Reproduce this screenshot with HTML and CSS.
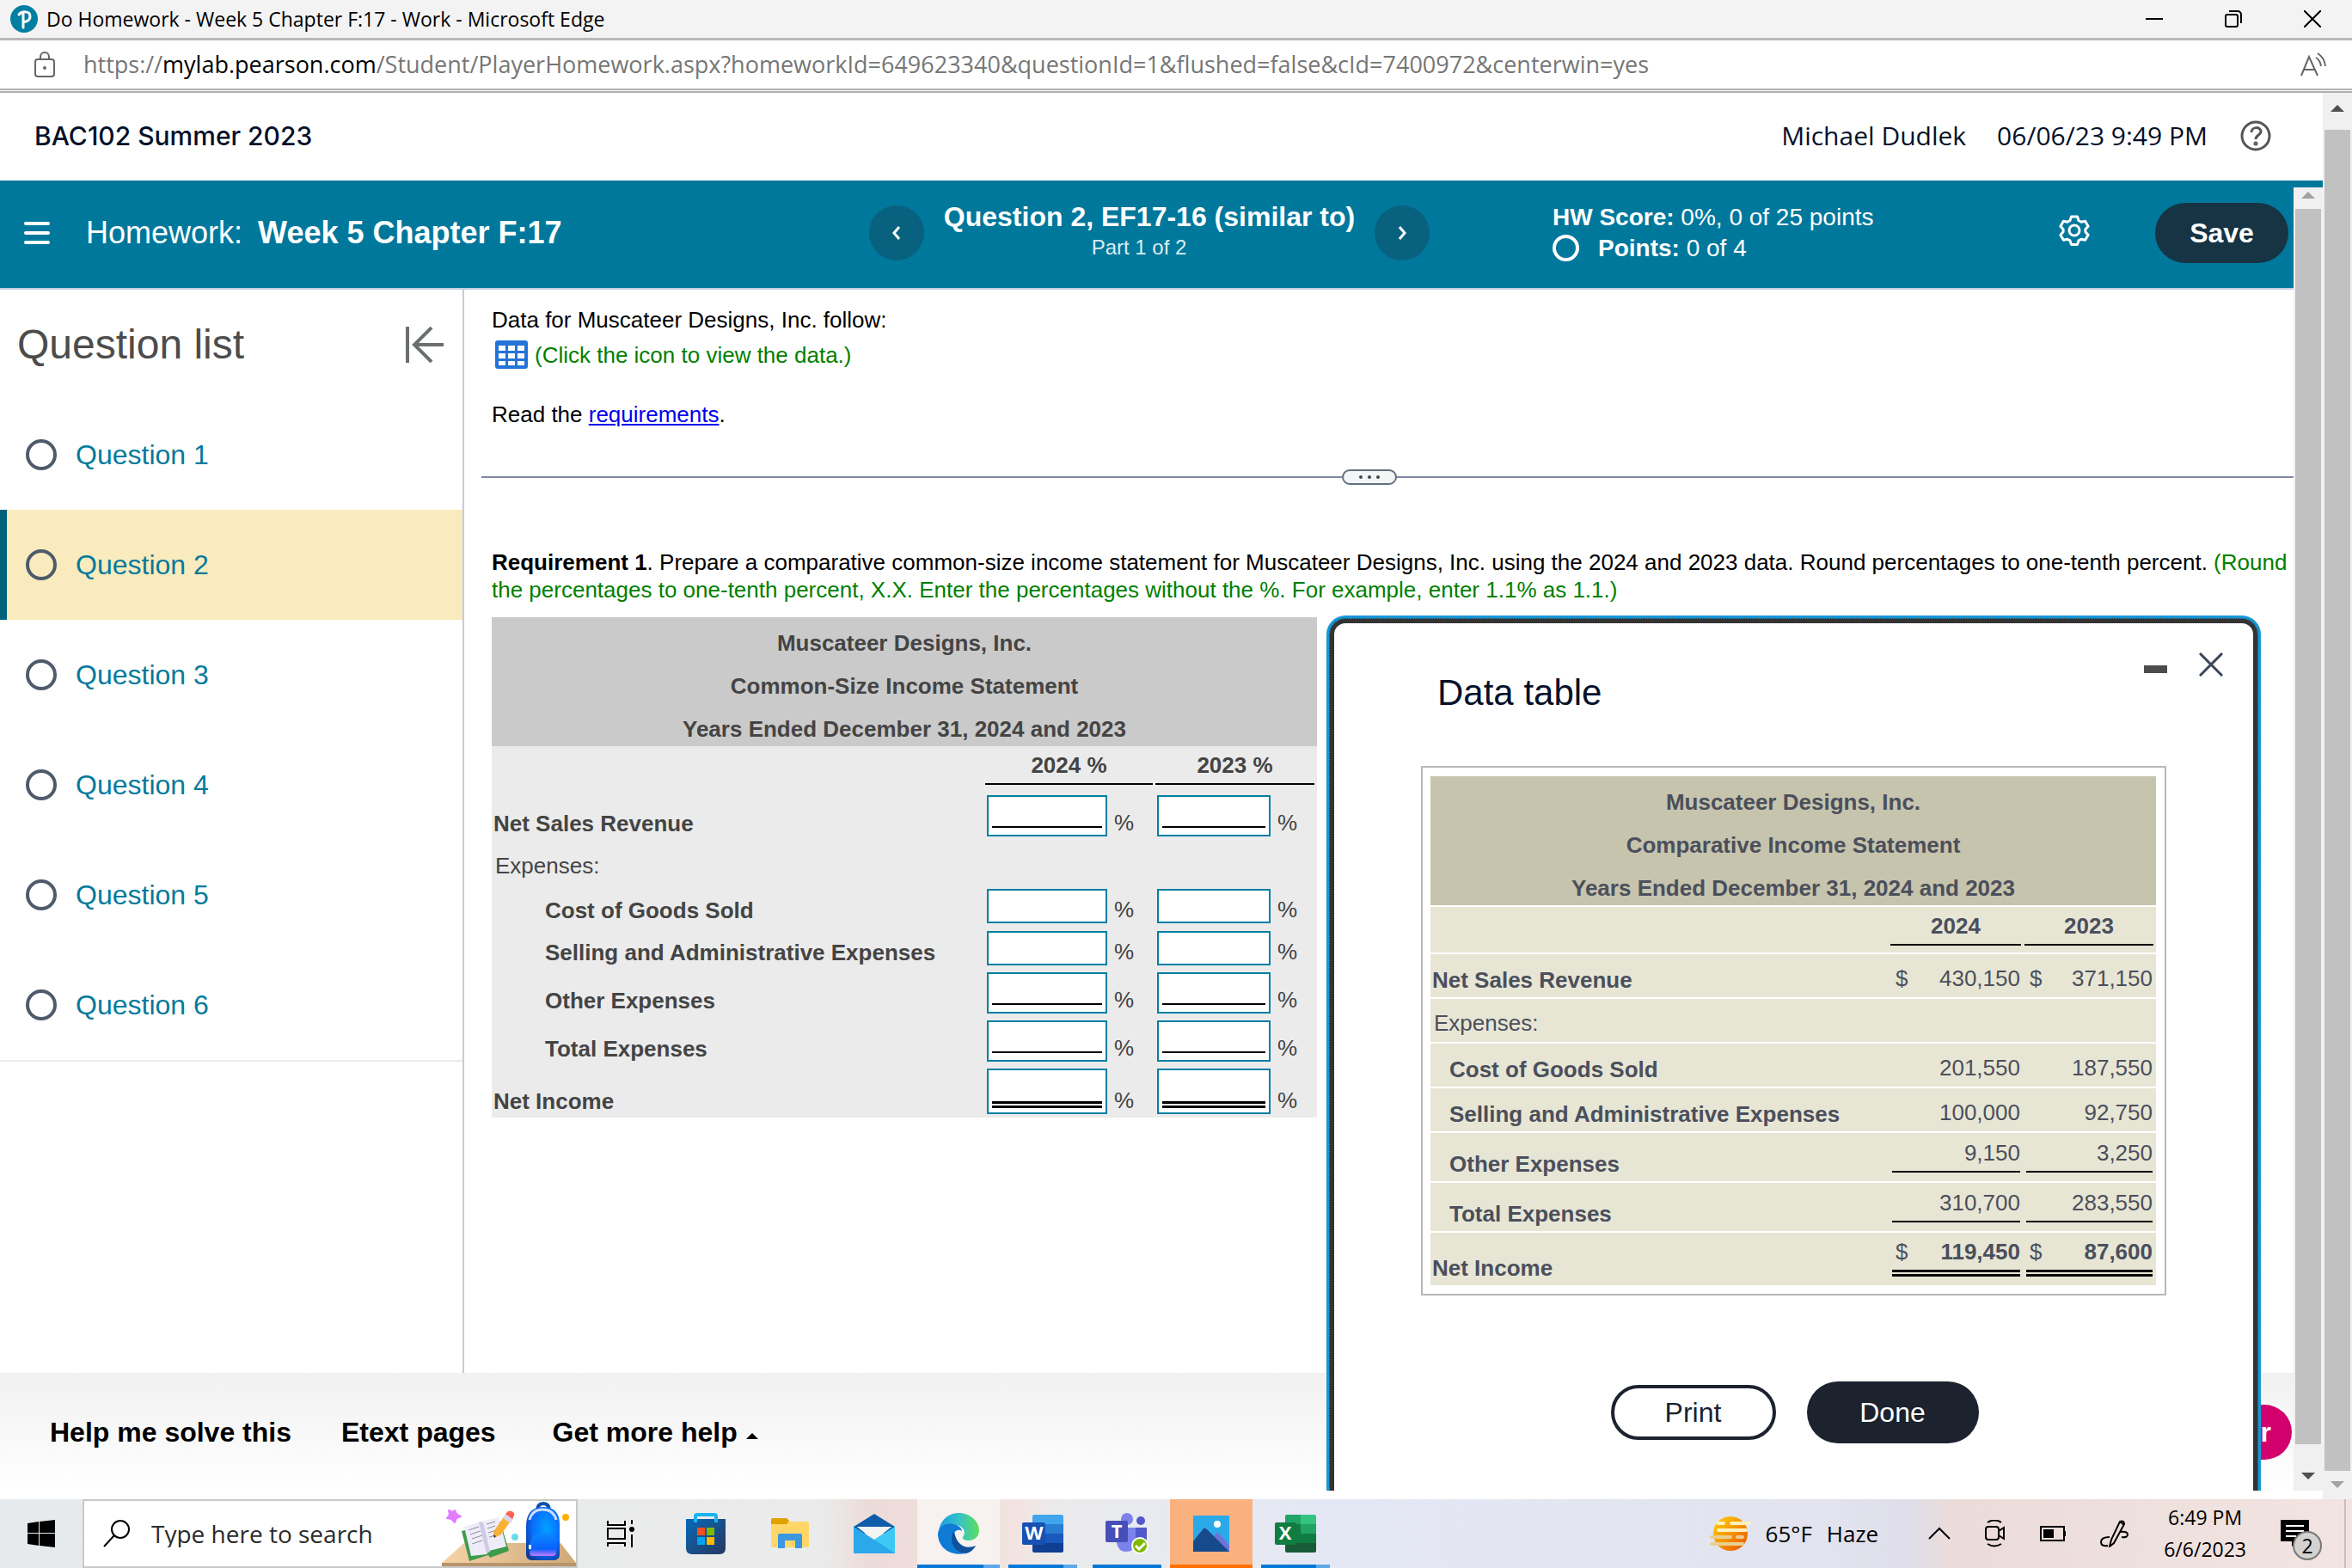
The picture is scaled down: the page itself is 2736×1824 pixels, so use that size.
FILE: index.html
```html
<!DOCTYPE html>
<html lang="en">

<head>
  <meta charset="UTF-8">
  <meta name="viewport" content="width=device-width, initial-scale=1.0">
  <title>Do Homework - Week 5 Chapter F:17</title>
  <link rel="stylesheet" href="styles.css">
</head>

<body>
  <!-- window title -->
  <div class="titlebar">
    <svg class="logo" width="32" height="32" viewBox="0 0 32 32">
      <circle cx="16" cy="16" r="16" fill="#007fa3" />
      <path d="M10 11c3-4 13-5 13 2 0 5-5 7-8 6M15 10v16" fill="none" stroke="#fff" stroke-width="3" stroke-linecap="round" />
    </svg>
    <span class="title">Do Homework - Week 5 Chapter F:17 - Work - Microsoft Edge</span>
    <div class="win-buttons">
      <button aria-label="Minimize"><svg width="20" height="20" viewBox="0 0 20 20"><path d="M0 10h20" /></svg></button>
      <button aria-label="Restore"><svg width="20" height="20" viewBox="0 0 20 20"><rect x="1" y="5" width="14" height="14" rx="2" /><path d="M5 1h10a4 4 0 0 1 4 4v10" /></svg></button>
      <button aria-label="Close"><svg width="20" height="20" viewBox="0 0 20 20"><path d="M0 0l20 20M20 0L0 20" /></svg></button>
    </div>
  </div>

  <!-- address -->
  <div class="urlbar">
    <svg class="lock" width="24" height="30" viewBox="0 0 24 30">
      <rect x="1" y="9" width="22" height="20" rx="3" />
      <path d="M7 9V6a5 5 0 0 1 10 0v3" />
      <circle cx="12" cy="19" r="1" />
    </svg>
    <span class="url">https://<b>mylab.pearson.com</b>/Student/PlayerHomework.aspx?homeworkId=649623340&amp;questionId=1&amp;flushed=false&amp;cId=7400972&amp;centerwin=yes</span>
    <svg class="aloud" width="30" height="28" viewBox="0 0 30 28">
      <path d="M1 27L10 5l10 22M4 20h13M18 6q5 3 6 10M20 1q8 5 9 15" />
    </svg>
  </div>

  <div class="viewport">
    <div class="frame">
      <header class="course">
        <h1>BAC102 Summer 2023</h1>
        <span class="user">Michael Dudlek</span>
        <span class="date">06/06/23 9:49 PM</span>
        <button class="help" aria-label="Help">
          <svg width="36" height="36" viewBox="0 0 36 36">
            <circle cx="18" cy="18" r="16" />
            <path d="M13 14c0-7 11-7 11-1 0 4-6 4-6 9" />
            <circle cx="18" cy="27" r="1" />
          </svg>
        </button>
      </header>

      <div class="player">
        <div class="player-main">
          <div class="assignment">
            <div class="name">
              <button class="menu" aria-label="Menu"><i></i><i></i><i></i></button>
              <h2>Homework: <b>Week 5 Chapter F:17</b></h2>
            </div>
            <div class="pager">
              <button class="round" aria-label="Previous"><svg width="10" height="16" viewBox="0 0 10 16"><path d="M8 1L2 8l6 7" /></svg></button>
              <div class="current">
                <strong>Question 2, EF17-16 (similar to)</strong>
                <span>Part 1 of 2</span>
              </div>
              <button class="round" aria-label="Next"><svg width="10" height="16" viewBox="0 0 10 16"><path d="M2 1l6 7-6 7" /></svg></button>
            </div>
            <div class="score">
              <p><b>HW Score:</b> 0%, 0 of 25 points</p>
              <p class="points"><i class="ring"></i><span><b>Points:</b> 0 of 4</span></p>
            </div>
            <button class="gear" aria-label="Settings">
              <svg width="36" height="36" viewBox="0 0 36 36">
                <path d="M14.500 2h7l1.500 4.500 3 1.700 4.600-1 3.500 6-3.200 3.500v3l3.200 3.500-3.500 6-4.600-1-3 1.700-1.500 4.500h-7L13 29.900l-3-1.700-4.600 1-3.500-6 3.200-3.500v-3L1.900 13.200l3.500-6 4.600 1 3-1.700z" />
                <circle cx="18" cy="18" r="6" />
              </svg>
            </button>
            <button class="save">Save</button>
          </div>

          <div class="work">
            <nav class="questions">
              <div class="list-head">
                <h3>Question list</h3>
                <button aria-label="Collapse">
                  <svg width="44" height="42" viewBox="0 0 44 42"><path d="M2 0v42M44 21H11M30 1L10 21l20 20" /></svg>
                </button>
              </div>
              <a href="#"><i class="ring"></i>Question 1</a>
              <a href="#" class="active"><i class="ring"></i>Question 2</a>
              <a href="#"><i class="ring"></i>Question 3</a>
              <a href="#"><i class="ring"></i>Question 4</a>
              <a href="#"><i class="ring"></i>Question 5</a>
              <a href="#"><i class="ring"></i>Question 6</a>
            </nav>

            <main class="question">
              <div class="intro">
                <p>Data for Muscateer Designs, Inc. follow:</p>
                <p class="data-link">
                  <svg width="38" height="33" viewBox="0 0 38 33">
                    <rect width="38" height="33" rx="3" fill="#2474d8" />
                    <path d="M4 6h8v6H4zM15 6h8v6h-8zM26 6h8v6h-8zM4 15h8v6H4zM15 15h8v6h-8zM26 15h8v6h-8zM4 24h8v5H4zM15 24h8v5h-8zM26 24h8v5h-8z" fill="#fff" />
                  </svg>
                  <span class="green">(Click the icon to view the data.)</span>
                </p>
                <p class="read">Read the <a href="#">requirements</a>.</p>
              </div>

              <div class="divider"><button aria-label="Resize"><i></i><i></i><i></i></button></div>

              <p class="requirement"><b>Requirement 1</b>. Prepare a comparative common-size income statement for Muscateer Designs, Inc. using the 2024 and 2023 data. Round percentages to one-tenth percent. <span class="green">(Round the percentages to one-tenth percent, X.X. Enter the percentages without the %. For example, enter 1.1% as 1.1.)</span></p>

              <table class="answer">
                <colgroup><col><col class="y1"><col class="y2"></colgroup>
                <thead>
                  <tr>
                    <th colspan="3" class="heading">
                      <div>Muscateer Designs, Inc.</div>
                      <div>Common-Size Income Statement</div>
                      <div>Years Ended December 31, 2024 and 2023</div>
                    </th>
                  </tr>
                  <tr class="years">
                    <td></td>
                    <th><div>2024 %</div></th>
                    <th><div>2023 %</div></th>
                  </tr>
                </thead>
                <tbody>
                  <tr class="total">
                    <th>Net Sales Revenue</th>
                    <td><label><span><input aria-label="Net Sales Revenue 2024"></span>%</label></td>
                    <td><label><span><input aria-label="Net Sales Revenue 2023"></span>%</label></td>
                  </tr>
                  <tr class="group"><td colspan="3">Expenses:</td></tr>
                  <tr>
                    <th class="indent">Cost of Goods Sold</th>
                    <td><label><span><input aria-label="Cost of Goods Sold 2024"></span>%</label></td>
                    <td><label><span><input aria-label="Cost of Goods Sold 2023"></span>%</label></td>
                  </tr>
                  <tr>
                    <th class="indent">Selling and Administrative Expenses</th>
                    <td><label><span><input aria-label="Selling Expenses 2024"></span>%</label></td>
                    <td><label><span><input aria-label="Selling Expenses 2023"></span>%</label></td>
                  </tr>
                  <tr class="total">
                    <th class="indent">Other Expenses</th>
                    <td><label><span><input aria-label="Other Expenses 2024"></span>%</label></td>
                    <td><label><span><input aria-label="Other Expenses 2023"></span>%</label></td>
                  </tr>
                  <tr class="total">
                    <th class="indent">Total Expenses</th>
                    <td><label><span><input aria-label="Total Expenses 2024"></span>%</label></td>
                    <td><label><span><input aria-label="Total Expenses 2023"></span>%</label></td>
                  </tr>
                  <tr class="net">
                    <th>Net Income</th>
                    <td><label><span><input aria-label="Net Income 2024"></span>%</label></td>
                    <td><label><span><input aria-label="Net Income 2023"></span>%</label></td>
                  </tr>
                </tbody>
              </table>
            </main>
          </div>

          <footer class="helpbar">
            <button>Help me solve this</button>
            <button>Etext pages</button>
            <button>Get more help<i class="caret"></i></button>
          </footer>

          <button class="tutor">r</button>

          <!-- data table popup -->
          <section class="modal">
            <div class="modal-tools">
              <button class="min" aria-label="Minimize"></button>
              <button class="close" aria-label="Close"><svg width="28" height="28" viewBox="0 0 28 28"><path d="M1 1l26 26M27 1L1 27" /></svg></button>
            </div>
            <h2>Data table</h2>
            <div class="sheet">
              <table>
                <colgroup><col><col class="y1"><col class="y2"></colgroup>
                <thead>
                  <tr>
                    <th colspan="3" class="heading">
                      <div>Muscateer Designs, Inc.</div>
                      <div>Comparative Income Statement</div>
                      <div>Years Ended December 31, 2024 and 2023</div>
                    </th>
                  </tr>
                  <tr class="years">
                    <td></td>
                    <th><div>2024</div></th>
                    <th><div>2023</div></th>
                  </tr>
                </thead>
                <tbody>
                  <tr>
                    <th>Net Sales Revenue</th>
                    <td><div><span>$</span>430,150</div></td>
                    <td><div><span>$</span>371,150</div></td>
                  </tr>
                  <tr class="group"><td colspan="3">Expenses:</td></tr>
                  <tr>
                    <th class="indent">Cost of Goods Sold</th>
                    <td><div>201,550</div></td>
                    <td><div>187,550</div></td>
                  </tr>
                  <tr>
                    <th class="indent">Selling and Administrative Expenses</th>
                    <td><div>100,000</div></td>
                    <td><div>92,750</div></td>
                  </tr>
                  <tr class="total">
                    <th class="indent">Other Expenses</th>
                    <td><div>9,150</div></td>
                    <td><div>3,250</div></td>
                  </tr>
                  <tr class="total">
                    <th class="indent">Total Expenses</th>
                    <td><div>310,700</div></td>
                    <td><div>283,550</div></td>
                  </tr>
                  <tr class="net">
                    <th>Net Income</th>
                    <td><div><span>$</span><b>119,450</b></div></td>
                    <td><div><span>$</span><b>87,600</b></div></td>
                  </tr>
                </tbody>
              </table>
            </div>
            <div class="modal-actions">
              <button class="print">Print</button>
              <button class="done">Done</button>
            </div>
          </section>
        </div>

        <div class="scroll inner"><i class="up"></i><i class="thumb"></i><i class="down"></i></div>
      </div>
    </div>
    <div class="scroll outer"><i class="up"></i><i class="thumb"></i><i class="down"></i></div>
  </div>

  <!-- taskbar -->
  <div class="taskbar">
    <button class="start" aria-label="Start">
      <svg width="32" height="32" viewBox="0 0 32 32"><path d="M0 4l13-2v13H0zM14 2l18-2v15H14zM0 16h13v14L0 28zM14 16h18v16l-18-2z" /></svg>
    </button>
    <div class="search">
      <svg class="lens" width="32" height="32" viewBox="0 0 32 32"><circle cx="20" cy="11" r="10" /><path d="M13 18L1 31" /></svg>
      <input type="text" placeholder="Type here to search" aria-label="Search">
      <svg class="art" width="156" height="76" viewBox="0 0 156 76">
        <defs>
          <linearGradient id="desk" x1="0" x2="1"><stop offset="0" stop-color="#f6d3a8" /><stop offset="1" stop-color="#cfa878" /></linearGradient>
          <radialGradient id="bag" cx="0.600" cy="0.400" r="0.700"><stop offset="0" stop-color="#00a2ff" /><stop offset="0.600" stop-color="#0a6cff" /><stop offset="1" stop-color="#0b3f9c" /></radialGradient>
          <linearGradient id="pocket" x1="0" y1="0" x2="0" y2="1"><stop offset="0" stop-color="#0a8cff" /><stop offset="0.700" stop-color="#0a60ff" /><stop offset="1" stop-color="#c77bff" /></linearGradient>
        </defs>
        <path d="M26 49h112l18 23H0z" fill="url(#desk)" />
        <path d="M0 72h156v4H0z" fill="#b8946a" />
        <path d="M15 11l2 4 5 3-5 2-2 5-4-4-5-1 3-4-1-5 5 2z" fill="#e27cff" stroke="#e27cff" stroke-width="2" stroke-linejoin="round" />
        <path d="M23 35l9 35 22-7 2 3 22-8-10-34z" fill="#3d9b4c" />
        <path d="M26 30l20-6 20-5 9 34-20 5-3 4-18 2z" fill="#eeecf8" />
        <path d="M43 25q4-3 6 3l7 31-4 2z" fill="#cfcbe4" />
        <path d="M31 34l12-4M33 39l12-4M35 44l12-4M35 50l12-4M52 27l10-3M53 32l9-3M54 37l9-3M55 42l8-2" stroke="#8f9099" stroke-width="1" />
        <path d="M61 43l-1-7 13-19 8 5-12 17z" fill="#f8b133" />
        <path d="M61 43l-1-4 3 2z" fill="#40223a" />
        <path d="M71 20l3-5 9 6-3 5z" fill="#ddd5ea" />
        <path d="M74 15l3-3q4-1 6 1 2 2 1 4l-2 4z" fill="#ff6250" />
        <circle cx="85" cy="42" r="4" fill="#6bdbe8" />
        <path d="M111 12q0-9 7-9t7 9" fill="none" stroke="#0d4fa8" stroke-width="4" />
        <path d="M98 30q0-23 20-23t19 23v32q0 7-7 7h-25q-7 0-7-7z" fill="url(#bag)" />
        <path d="M102 22q3-12 15-12 13 0 16 12" fill="none" stroke="#c9dcff" stroke-width="3" />
        <path d="M102 56q0-19 16-19t15 19v4q0 4-4 4h-23q-4 0-4-4z" fill="url(#pocket)" />
        <path d="M101 51h3v5h-3z" fill="#fff" />
        <circle cx="144" cy="19" r="4" fill="#ffb000" />
      </svg>
    </div>
    <div class="apps">
      <button aria-label="Task view">
        <svg width="32" height="32" viewBox="0 0 32 32" fill="none" stroke="#000" stroke-width="2"><path d="M1 1v5h20V1M1 31v-4h20v4M1 10h20v12H1zM29 0v5M29 17v15" /><circle cx="29" cy="11" r="2" fill="#000" /></svg>
      </button>
      <button aria-label="Store">
        <svg width="48" height="48" viewBox="0 0 48 48">
          <linearGradient id="st" x1="0" y1="0" x2="1" y2="1"><stop offset="0" stop-color="#0869b8" /><stop offset="1" stop-color="#26385e" /></linearGradient>
          <path d="M1 7h46v34q0 7-7 7H8q-7 0-7-7z" fill="url(#st)" />
          <path d="M12 11V4q0-2 2-2h20q2 0 2 2v7" fill="none" stroke="#18b4f1" stroke-width="4" />
          <path d="M14 17h9v9h-9z" fill="#f25022" /><path d="M25 17h9v9h-9z" fill="#7fba00" /><path d="M14 28h9v9h-9z" fill="#00a4ef" /><path d="M25 28h9v9h-9z" fill="#ffb900" />
        </svg>
      </button>
      <button aria-label="File Explorer">
        <svg width="44" height="36" viewBox="0 0 44 36">
          <path d="M0 2q0-2 2-2h16l4 4h20q2 0 2 2v26q0 2-2 2H2q-2 0-2-2z" fill="#ffd667" />
          <path d="M0 2q0-2 2-2h16l3 3-3 4H0z" fill="#dfa200" />
          <path d="M8 35V20q0-2 2-2h24q2 0 2 2v15h-8v-9H16v9z" fill="#3b97e0" />
        </svg>
      </button>
      <button aria-label="Mail">
        <svg width="48" height="46" viewBox="0 0 48 46">
          <path d="M0 15L24 0l24 15v8H0z" fill="#0f5ca8" /><path d="M4 15h40L24 31z" fill="#f4f4f4" /><path d="M0 15l24 15 24-15v31H0z" fill="#2aa8ea" /><path d="M4 15h40L24 30z" fill="#f4f4f4" /><path d="M24 30l24-15v31z" fill="#3dc9f5" />
        </svg>
      </button>
      <button class="open stacked current-app" aria-label="Edge">
        <svg width="48" height="48" viewBox="0 0 48 48">
          <linearGradient id="e1" x1="0" x2="1"><stop offset="0" stop-color="#1b9de2" /><stop offset="0.500" stop-color="#35c1c9" /><stop offset="1" stop-color="#5bdf5c" /></linearGradient>
          <path d="M1 20C4 6 14 0 24 0c14 0 24 10 24 20 0 8-6 12-12 12-5 0-8-2-7-4 5-7-1-14-9-14C10 13 3 17 1 20z" fill="url(#e1)" />
          <path d="M0 24c1-8 9-13 18-11 6 1 10 5 10 8-4-3-10 0-11 7-1 10 6 18 16 19C14 51 0 40 0 24z" fill="#0f7bd6" />
          <path d="M19 21c-7 9-1 26 14 26 5-1 9-5 11-9-12 5-23-1-25-17z" fill="#0e529c" />
        </svg>
      </button>
      <button class="open stacked" aria-label="Word">
        <svg width="48" height="44" viewBox="0 0 48 44">
          <path d="M12 2q0-2 2-2h32q2 0 2 2v9H12z" fill="#41a5ee" /><path d="M12 11h36v11H12z" fill="#2b7cd3" /><path d="M12 22h36v11H12z" fill="#185abd" /><path d="M12 33h36v9q0 2-2 2H14q-2 0-2-2z" fill="#103f91" />
          <rect y="9" width="27" height="26" rx="2" fill="#1651b4" /><text x="14" y="29" class="tile">W</text>
        </svg>
      </button>
      <button class="open" aria-label="Teams">
        <svg width="50" height="48" viewBox="0 0 50 48">
          <circle cx="25" cy="7" r="7" fill="#7b83eb" /><circle cx="41" cy="9" r="5" fill="#5059c9" /><path d="M32 17h16v13q-1 8-8 8-6 0-8-5z" fill="#5059c9" /><path d="M13 17h22v18q-2 10-11 10T13 35z" fill="#7b83eb" />
          <rect y="9" width="26" height="25" rx="2" fill="#464eb8" /><text x="13" y="29" class="tile">T</text>
          <circle cx="40" cy="38" r="10" fill="#fff" /><circle cx="40" cy="38" r="8" fill="#7fba00" /><path d="M35 38l4 4 7-7" fill="none" stroke="#fff" stroke-width="3" />
        </svg>
      </button>
      <button class="open alert" aria-label="Photos">
        <svg width="42" height="42" viewBox="0 0 42 42">
          <path d="M0 0h42v42H0z" fill="#2ba9e9" /><path d="M12 42l15-22q3-1 15 15v7z" fill="#6f72d6" /><path d="M0 30l12-15q2-1 4 1l26 26H0z" fill="#174a8c" /><circle cx="28" cy="10" r="4" fill="#fff" />
        </svg>
      </button>
      <button class="open stacked" aria-label="Excel">
        <svg width="48" height="44" viewBox="0 0 48 44">
          <path d="M12 2q0-2 2-2h16v11H12z" fill="#21a366" /><path d="M30 0h16q2 0 2 2v9H30z" fill="#33c481" /><path d="M12 11h18v11H12z" fill="#107c41" /><path d="M30 11h18v11H30z" fill="#21a366" /><path d="M12 22h36v11H12z" fill="#107c41" /><path d="M12 33h36v9q0 2-2 2H14q-2 0-2-2z" fill="#185c37" />
          <rect y="9" width="25" height="26" rx="2" fill="#107c41" /><text x="12" y="29" class="tile">X</text>
        </svg>
      </button>
    </div>
    <div class="tray">
      <button class="weather">
        <svg width="48" height="42" viewBox="0 0 48 42">
          <linearGradient id="sun" x1="0" y1="0" x2="1" y2="1"><stop offset="0" stop-color="#ffd400" /><stop offset="1" stop-color="#e85400" /></linearGradient>
          <circle cx="24" cy="21" r="20" fill="url(#sun)" />
          <path d="M10 9h6M25 9h21M10 17h32" stroke="#fff1bd" stroke-width="4" stroke-linecap="round" /><path d="M2 25h22M32 25h6M2 33h36" stroke="#e9cf90" stroke-width="4" stroke-linecap="round" />
        </svg>
        <span>65°F</span><span>Haze</span>
      </button>
      <button aria-label="Show hidden icons"><svg width="26" height="32" viewBox="0 0 26 32"><path d="M1 22L13 10l12 12" /></svg></button>
      <button aria-label="Meet Now"><svg width="24" height="32" viewBox="0 0 24 32"><rect x="1" y="8" width="15" height="15" rx="3" /><path d="M16 13l6-4v13l-6-4M3 3q8-5 16 0M3 28q8 5 16 0" /></svg></button>
      <button aria-label="Battery"><svg width="30" height="32" viewBox="0 0 30 32"><path d="M1 8h27v16H1zM29 13v6" /><path d="M4 11h12v10H4z" fill="#000" stroke="none" /></svg></button>
      <button aria-label="Ink"><svg width="34" height="32" viewBox="0 0 34 32"><path d="M11 31l2-8L23 2q5-2 5 3l-12 22zM23 2l5 4M11 20q-10 0-10 6 0 5 8 4M24 14q8-1 8 3t-7 3" /></svg></button>
      <div class="clock"><span>6:49 PM</span><span>6/6/2023</span></div>
      <button class="notes" aria-label="Notifications">
        <svg width="34" height="32" viewBox="0 0 34 32"><path d="M0 0h33v25H19l-6 6v-6H0z" fill="#000" stroke="none" /><path d="M6 7h21M6 13h21M6 19h12" stroke="#fff" /></svg>
        <span class="badge">2</span>
      </button>
    </div>
  </div>
</body>

</html>
```
FILE: styles.css
```css
* {
  box-sizing: border-box;
}

body {
  margin: 0;
  height: 100vh;
  display: flex;
  flex-direction: column;
  overflow: hidden;
  background-color: #fff;
  color: #000;
  font-family: "Liberation Sans", Arial, sans-serif;
  font-size: 26px;
  line-height: 32px;
}

h1,
h2,
h3,
p {
  margin: 0;
  font-weight: normal;
}

button {
  padding: 0;
  border: none;
  background: none;
  color: inherit;
  font: inherit;
  cursor: pointer;
}

svg {
  display: block;
  flex: none;
}

.green {
  color: #007f00;
}

/* browser window */
.titlebar {
  flex: none;
  height: 47px;
  padding: 0 36px 0 12px;
  display: flex;
  align-items: center;
  background-color: #f3f3f3;
  border-bottom: 3px solid #b8b8b8;
  font-family: "Open Sans", "Noto Sans", sans-serif;
  font-size: 23px;
}

.titlebar .title {
  flex: 1;
  margin-left: 10px;
}

.win-buttons {
  display: flex;
  gap: 72px;
}

.win-buttons svg {
  fill: none;
  stroke: #000;
  stroke-width: 2;
}

.urlbar {
  flex: none;
  height: 61px;
  padding: 0 30px 0 40px;
  display: flex;
  align-items: center;
  border-bottom: 5px double #b0b0b0;
  font-family: "Open Sans", "Noto Sans", sans-serif;
  font-size: 27px;
}

.urlbar .url {
  flex: 1;
  margin-left: 33px;
  color: #767676;
}

.urlbar .url b {
  font-weight: normal;
  color: #000;
}

.lock,
.aloud {
  fill: none;
  stroke: #666;
  stroke-width: 2;
}

.viewport {
  flex: 1;
  min-height: 0;
  display: flex;
}

.frame {
  flex: 1;
  min-width: 0;
  display: flex;
  flex-direction: column;
  padding-bottom: 10px;
}

.course {
  flex: none;
  height: 102px;
  padding: 0 60px 2px 40px;
  display: flex;
  align-items: center;
  color: #05112a;
  font-family: "Open Sans", "Noto Sans", sans-serif;
  font-size: 30px;
}

.course h1 {
  flex: 1;
  font-family: Inter, sans-serif;
  font-size: 30px;
  font-weight: 500;
}

.course .date {
  margin: 0 38px 0 36px;
}

.help svg {
  fill: none;
  stroke: #555;
  stroke-width: 3;
}

/* homework player */
.player {
  flex: 1;
  min-height: 0;
  display: flex;
  border-top: 8px solid #00789c;
}

.player-main {
  flex: 1;
  min-width: 0;
  position: relative;
  display: flex;
  flex-direction: column;
  overflow: hidden;
}

.assignment {
  flex: none;
  height: 119px;
  padding: 0 6px 12px 28px;
  display: flex;
  align-items: center;
  background-color: #00789c;
  border-bottom: 2px solid #c7cfe0;
  color: #fff;
}

.assignment .name {
  width: 983px;
  display: flex;
  align-items: center;
  gap: 42px;
}

.name h2 {
  font-size: 36px;
}

.name h2 b {
  margin-left: 8px;
}

.menu {
  display: flex;
  flex-direction: column;
  gap: 7px;
}

.menu i {
  width: 30px;
  height: 4px;
  border-radius: 2px;
  background-color: #fff;
}

.pager {
  display: flex;
  align-items: center;
}

.round {
  width: 64px;
  height: 64px;
  display: flex;
  align-items: center;
  justify-content: center;
  border-radius: 50%;
  background-color: #08617f;
}

.round svg {
  fill: none;
  stroke: #fff;
  stroke-width: 3;
}

.current {
  width: 524px;
  padding-bottom: 6px;
  display: flex;
  flex-direction: column;
  align-items: center;
}

.current strong {
  font-size: 32px;
  line-height: 40px;
}

.current span {
  margin-right: 24px;
  color: #dcecf2;
  font-size: 24px;
}

.score {
  flex: 1;
  margin-left: 143px;
  font-size: 28px;
  line-height: 36px;
}

.points {
  display: flex;
  align-items: center;
  gap: 22px;
}

.ring {
  flex: none;
  width: 36px;
  height: 36px;
  border: 4px solid #4d5b6b;
  border-radius: 50%;
}

.points .ring {
  width: 31px;
  height: 31px;
  border-color: #fff;
}

.gear {
  padding-bottom: 6px;
}

.gear svg {
  fill: none;
  stroke: #fff;
  stroke-width: 3;
  stroke-linejoin: round;
}

.save {
  width: 155px;
  height: 70px;
  margin-left: 76px;
  border-radius: 35px;
  background-color: #163444;
  font-size: 32px;
  font-weight: bold;
}

.work {
  flex: 1;
  min-height: 0;
  display: flex;
}

.questions {
  flex: none;
  width: 540px;
  border-right: 2px solid #c7cbdb;
}

.list-head {
  height: 128px;
  padding: 0 22px 0 20px;
  display: flex;
  align-items: center;
  justify-content: space-between;
  color: #4c4c4c;
}

.list-head h3 {
  font-size: 48px;
}

.list-head svg {
  fill: none;
  stroke: #6a7070;
  stroke-width: 4;
}

.questions a {
  height: 128px;
  padding-left: 30px;
  display: flex;
  align-items: center;
  gap: 22px;
  color: #047a9c;
  font-size: 32px;
  text-decoration: none;
}

.questions a.active {
  padding-left: 22px;
  border-left: 8px solid #00617a;
  background-color: #f9ebbd;
}

.questions a:last-child {
  height: 130px;
  border-bottom: 2px solid #ebebeb;
}

.question {
  flex: 1;
  min-width: 0;
}

.intro {
  padding: 19px 32px 0;
}

.data-link {
  margin-top: 8px;
  display: flex;
  align-items: center;
  gap: 8px;
  padding-left: 4px;
}

.read {
  margin-top: 37px;
}

.read a {
  color: #0000ee;
}

.divider {
  height: 20px;
  margin: 47px 0 0 20px;
  display: flex;
  align-items: center;
}

.divider::before,
.divider::after {
  content: "";
  flex: 1;
  height: 2px;
  background-color: #8087a3;
}

.divider::before {
  flex: none;
  width: 1001px;
}

.divider button {
  width: 64px;
  height: 18px;
  display: flex;
  align-items: center;
  justify-content: center;
  gap: 6px;
  border: 2px solid #607080;
  border-radius: 9px;
  background-color: #f4f5f7;
}

.divider i {
  width: 4px;
  height: 4px;
  border-radius: 50%;
  background-color: #444;
}

.requirement {
  margin: 73px 0 16px 32px;
}

/* both statements */
table {
  border-collapse: collapse;
  table-layout: fixed;
}

th,
td {
  padding: 0 2px;
  vertical-align: bottom;
}

tbody th {
  text-align: left;
}

.heading {
  padding: 0;
}

.heading div {
  padding: 14px 0 4px;
}

.years div {
  border-bottom: 2px solid #000;
}

.answer {
  width: 960px;
  margin-left: 32px;
  background-color: #ebebeb;
  color: #444;
}

.answer .y1 {
  width: 198px;
}

.answer .y2 {
  width: 188px;
}

.answer .heading {
  background-color: #cacaca;
}

.answer .years {
  height: 53px;
}

.answer .years th {
  padding: 0 3px 8px 0;
}

.answer .years div {
  padding-bottom: 5px;
}

.answer tbody tr {
  height: 49px;
}

.answer tbody th {
  padding-bottom: 3px;
}

.answer tbody th.indent {
  padding-left: 62px;
}

.answer tbody .group {
  height: 52px;
}

.answer tbody .group td {
  padding: 0 4px 6px;
}

.answer tbody td {
  padding-bottom: 4px;
}

.answer tbody .total {
  height: 56px;
}

.answer tbody .net {
  height: 61px;
}

.answer label {
  display: flex;
  align-items: flex-end;
  gap: 8px;
}

.answer label span {
  width: 140px;
  height: 40px;
  padding: 0 4px;
  display: flex;
  border: 2px solid #007fa3;
  background-color: #fff;
}

.answer td:last-child span {
  width: 132px;
}

.answer input {
  width: 100%;
  padding: 0;
  border: none;
  outline: none;
  font: inherit;
}

.answer .total span {
  height: 48px;
  padding-bottom: 8px;
}

.answer .total input {
  border-bottom: 2px solid #000;
}

.answer .net span {
  height: 53px;
  padding-bottom: 5px;
}

.answer .net input {
  border-bottom: 8px double #000;
}

/* bottom help links */
.helpbar {
  flex: none;
  height: 137px;
  padding-left: 58px;
  display: flex;
  align-items: center;
  gap: 58px;
  background: linear-gradient(#f1f1f1, #fff);
  font-size: 32px;
  font-weight: bold;
}

.helpbar button:last-child {
  margin-left: 8px;
}

.caret {
  display: inline-block;
  margin: 0 0 3px 10px;
  border: 7px solid transparent;
  border-top: none;
  border-bottom-color: #000;
}

.tutor {
  position: absolute;
  right: 2px;
  bottom: 36px;
  width: 100px;
  height: 64px;
  padding-right: 24px;
  border-radius: 32px;
  background-color: #d2006c;
  box-shadow: 0 0 0 3px #fafafa;
  color: #fff;
  font-size: 32px;
  font-weight: bold;
  text-align: right;
}

/* popup */
.modal {
  position: absolute;
  top: 502px;
  right: 42px;
  bottom: -20px;
  width: 1079px;
  border: 5px solid #333;
  border-radius: 18px;
  outline: 1px dotted #333;
  box-shadow: 0 0 0 4px #1797d6;
  background-color: #fff;
}

.modal-tools {
  padding: 34px 35px 0;
  display: flex;
  justify-content: flex-end;
  gap: 37px;
}

.min {
  width: 27px;
  height: 9px;
  margin-top: 15px;
  background-color: #4c4c4c;
}

.close svg {
  fill: none;
  stroke: #3a4657;
  stroke-width: 3;
}

.modal h2 {
  margin: 0 0 66px 120px;
  color: #05112a;
  font-size: 42px;
  line-height: 38px;
}

.sheet {
  width: 867px;
  margin: 0 auto;
  padding: 8px 10px 10px 9px;
  border: 2px solid #b8b8b8;
  color: #4b4f5c;
}

.sheet table {
  width: 100%;
}

.sheet .y1 {
  width: 156px;
}

.sheet .y2 {
  width: 154px;
}

.sheet tr {
  height: 52px;
  background-color: #e7e6d5;
  border-top: 2px solid #fff;
}

.sheet .heading {
  background-color: #c6c4ad;
}

.sheet .years {
  height: 55px;
}

.sheet .years th {
  padding: 0 3px 8px 1px;
}

.sheet .years div {
  padding-bottom: 5px;
}

.sheet tbody th {
  padding-bottom: 4px;
}

.sheet tbody th.indent {
  padding-left: 22px;
}

.sheet tbody td {
  padding: 0 4px 6px 3px;
  text-align: right;
}

.sheet tbody .group td {
  padding: 0 4px 6px;
  text-align: left;
}

.sheet td div {
  display: flex;
  justify-content: flex-end;
}

.sheet td span {
  margin: 0 auto 0 4px;
}

.sheet .total {
  height: 58px;
}

.sheet .net {
  height: 62px;
}

.sheet .total td,
.sheet .net td {
  padding-bottom: 10px;
}

.sheet .total td div {
  padding-bottom: 5px;
  border-bottom: 2px solid #000;
}

.sheet .net td div {
  padding-bottom: 5px;
  border-bottom: 8px double #000;
}

.modal-actions {
  margin-top: 100px;
  padding-left: 2px;
  display: flex;
  align-items: center;
  justify-content: center;
  gap: 36px;
  font-size: 32px;
}

.print {
  width: 192px;
  height: 64px;
  border: 4px solid #1c222e;
  border-radius: 32px;
  color: #1c222e;
}

.done {
  width: 200px;
  height: 72px;
  border-radius: 36px;
  background-color: #1c222e;
  color: #fff;
}

/* scrollbars */
.scroll {
  flex: none;
  width: 34px;
  padding: 5px 2px 13px;
  display: flex;
  flex-direction: column;
  align-items: center;
  background-color: #f0f0f0;
}

.scroll .thumb {
  flex: 1;
  align-self: stretch;
  margin: 12px 0 33px;
  background-color: #c1c1c1;
}

.scroll .up,
.scroll .down {
  border: 8px solid transparent;
  border-top: none;
  border-bottom-color: #a3a3a3;
}

.scroll .down {
  border-top: 8px solid #505050;
  border-bottom: none;
}

.scroll.outer {
  padding-top: 14px;
}

.outer .thumb {
  margin: 21px 0 12px;
}

.outer .up {
  border-bottom-color: #505050;
}

.outer .down {
  border-top-color: #a3a3a3;
}

/* taskbar */
.taskbar {
  flex: none;
  height: 80px;
  display: flex;
  background: linear-gradient(90deg, #e7eaec 0, #ebebeb 35%, #ecdbd8 37%, #f3e3e0 43%, #ebebec 45%, #e4e8f4 56%, #e2e3ee 78%, #dfdeea 81%, #ebdcd9 83%, #f1e4e1 100%);
  font-family: "Open Sans", "Noto Sans", sans-serif;
}

.start {
  width: 96px;
  padding-left: 32px;
}

.search {
  width: 576px;
  padding-left: 22px;
  display: flex;
  align-items: center;
  border: 2px solid #c9c9c9;
  background-color: #fff;
  font-size: 28px;
}

.search input {
  flex: 1;
  min-width: 0;
  padding: 0 0 0 24px;
  border: none;
  outline: none;
  font: inherit;
}

.search input::placeholder {
  color: #2b2b2b;
}

.lens,
.tray svg {
  fill: none;
  stroke: #000;
  stroke-width: 2;
}

.apps {
  flex: 1;
  display: flex;
  gap: 2px;
}

.apps button {
  width: 96px;
  display: flex;
  align-items: center;
  justify-content: center;
}

.apps button:first-child {
  width: 99px;
}

.apps .open {
  background: linear-gradient(#0078d7, #0078d7) 50% 100% / 80px 4px no-repeat;
}

.apps .stacked {
  background: linear-gradient(90deg, #0078d7 80%, #5ca8e8 80%) 50% 100% / 80px 4px no-repeat;
}

.apps .current-app {
  background-size: 100% 4px;
  background-color: #f7f1ef;
}

.apps .alert {
  border-top: 4px solid #fbb17e;
  border-bottom: 4px solid #ff6f00;
  background: #fbb17e;
}

.tile {
  fill: #fff;
  font-family: "Open Sans", sans-serif;
  font-size: 22px;
  font-weight: bold;
  text-anchor: middle;
}

.tray {
  display: flex;
  align-items: center;
  gap: 40px;
  padding-right: 40px;
  border-right: 2px solid #cbbcba;
  margin-right: 7px;
}

.weather {
  margin-right: 18px;
  display: flex;
  align-items: center;
  gap: 17px;
}

.weather svg {
  stroke: none;
}

.clock {
  display: flex;
  flex-direction: column;
  align-items: center;
  font-size: 23px;
  line-height: 37px;
}

.notes {
  position: relative;
}

.badge {
  position: absolute;
  top: 13px;
  left: 14px;
  width: 34px;
  height: 34px;
  border: 2px solid #777;
  border-radius: 50%;
  background-color: #d4d2d1;
  font-size: 23px;
  line-height: 30px;
}
```
